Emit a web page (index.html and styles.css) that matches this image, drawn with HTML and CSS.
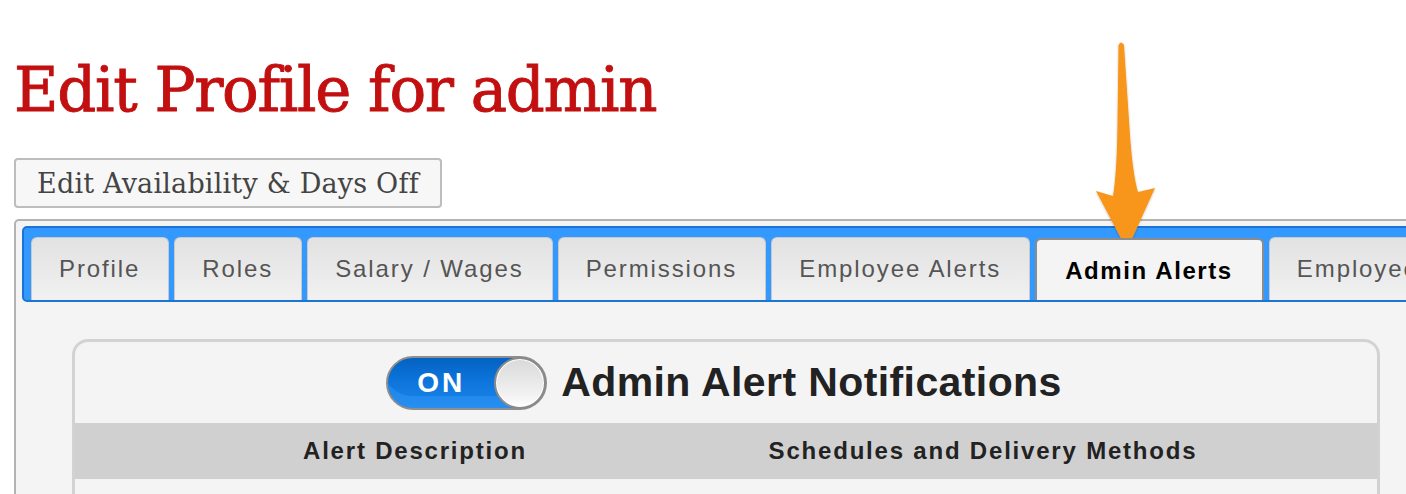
FILE: index.html
```html
<!DOCTYPE html>
<html>
<head>
<meta charset="utf-8">
<title>Edit Profile for admin</title>
<link rel="stylesheet" href="styles.css">
</head>
<body>
<div class="page">
  <h1 class="title">Edit Profile for admin</h1>
  <button class="avail-btn">Edit Availability &amp; Days Off</button>
  <div class="container">
    <div class="tabbar">
      <div class="tab">Profile</div>
      <div class="tab">Roles</div>
      <div class="tab">Salary / Wages</div>
      <div class="tab">Permissions</div>
      <div class="tab">Employee Alerts</div>
      <div class="tab active">Admin Alerts</div>
      <div class="tab">Employee Profile Alerts</div>
    </div>
    <div class="panel">
      <div class="panel-head">
        <div class="toggle">
          <span class="toggle-label">ON</span>
          <span class="knob"></span>
        </div>
        <h2 class="panel-title">Admin Alert Notifications</h2>
      </div>
      <div class="table-head">
        <div class="col col-desc">Alert Description</div>
        <div class="col col-sched">Schedules and Delivery Methods</div>
        <div class="col col-rest"></div>
      </div>
      <div class="table-body"></div>
    </div>
  </div>
  <svg class="arrow" width="80" height="230" viewBox="1090 30 80 230" xmlns="http://www.w3.org/2000/svg">
    <defs>
      <filter id="sh" x="-30%" y="-10%" width="160%" height="130%">
        <feDropShadow dx="0" dy="1" stdDeviation="1.2" flood-color="#000" flood-opacity="0.25"/>
      </filter>
    </defs>
    <path filter="url(#sh)" fill="#f8961e" d="M1118.5 45 Q1121 40 1124 45 L1129 120 Q1132 172 1138 192 L1155 188 L1127 250 L1096 191 L1113 196 Q1117 172 1117.5 120 Z"/>
  </svg>
</div>
</body>
</html>
```

FILE: styles.css
```css
html, body {
  margin: 0;
  padding: 0;
  background: #ffffff;
  overflow: hidden;
}

.page {
  position: relative;
  width: 1406px;
  height: 494px;
  padding: 0 0 0 14px;
  box-sizing: border-box;
}

.title {
  margin: 0;
  padding-top: 52px;
  font-family: "DejaVu Serif", serif;
  font-weight: normal;
  font-size: 61px;
  line-height: 76px;
  color: #c20f10;
  letter-spacing: -1.3px;
  -webkit-text-stroke: 0.9px #c20f10;
}

.avail-btn {
  display: block;
  margin-top: 30px;
  height: 50px;
  padding: 0 21px;
  font-family: "DejaVu Serif", serif;
  font-size: 27px;
  letter-spacing: 0.2px;
  color: #444444;
  background: #f7f7f7;
  border: 2px solid #bdbdbd;
  border-radius: 4px;
}

.container {
  margin-top: 11px;
  width: 1424px;
  height: 300px;
  box-sizing: border-box;
  padding: 5px 6px 0;
  background: #f4f4f4;
  border: 2px solid #b3b3b3;
  border-radius: 5px;
}

.tabbar {
  display: flex;
  gap: 5px;
  height: 76px;
  box-sizing: border-box;
  padding: 9px 7px 0;
  background: #3399ff;
  border: 2px solid #1c74d6;
  border-radius: 5px;
  overflow: hidden;
  white-space: nowrap;
}

.tab {
  flex: none;
  height: 63px;
  box-sizing: border-box;
  padding: 0 28px 0 27px;
  display: flex;
  align-items: center;
  font-family: "Liberation Sans", Arial, sans-serif;
  font-size: 24px;
  letter-spacing: 1.9px;
  color: #555555;
  background: linear-gradient(#e2e2e2, #f1f1f1);
  border: 1px solid #c9c9c9;
  border-bottom: none;
  border-radius: 6px 6px 0 0;
}

.tab.active {
  margin-top: 1px;
  height: 64px;
  margin-bottom: -2px;
  padding: 0 29px 0 28px;
  font-weight: bold;
  letter-spacing: 1.6px;
  color: #000000;
  background: #f4f4f4;
  border: 2px solid #8c8c8c;
  border-bottom: none;
  position: relative;
  z-index: 1;
}

.panel {
  margin: 37px 50px 0;
  background: #f4f4f4;
  border: 3px solid #d2d2d2;
  border-bottom: none;
  border-radius: 16px 16px 0 0;
  height: 200px;
}

.panel-head {
  height: 81px;
  display: flex;
  align-items: center;
  justify-content: center;
  gap: 14px;
  padding-right: 4px;
}

.toggle {
  position: relative;
  width: 161px;
  height: 54px;
  box-sizing: border-box;
  border: 2px solid #8e8e8e;
  border-radius: 27px;
  background: linear-gradient(#0462c2, #0c74db 45%, #1d86ea);
  box-shadow: inset 0 -18px 0 -6px rgba(60, 160, 255, 0.35);
  display: flex;
  align-items: center;
}

.toggle-label {
  margin-left: 29px;
  font-family: "Liberation Sans", Arial, sans-serif;
  font-weight: bold;
  font-size: 28px;
  letter-spacing: 3px;
  color: #ffffff;
}

.knob {
  position: absolute;
  right: -1px;
  top: -1px;
  width: 52px;
  height: 52px;
  box-sizing: border-box;
  border-radius: 50%;
  border: 2px solid #8a8a8a;
  background: linear-gradient(#d9d9d9, #f4f4f4 80%, #ffffff);
  box-shadow: inset 0 0 0 1px #ffffff;
}

.panel-title {
  margin: 0;
  font-family: "Liberation Sans", Arial, sans-serif;
  font-weight: bold;
  font-size: 41px;
  letter-spacing: 0.4px;
  color: #222222;
}

.table-head {
  display: grid;
  grid-template-columns: 680px 456px 1fr;
  height: 56px;
  align-items: center;
  background: #d0d0d0;
}

.col {
  text-align: center;
  font-family: "Liberation Sans", Arial, sans-serif;
  font-weight: bold;
  font-size: 24px;
  letter-spacing: 1.8px;
  color: #222222;
}

.table-body {
  height: 60px;
  background: #f4f4f4;
}

.arrow {
  position: absolute;
  left: 1090px;
  top: 30px;
}
```
